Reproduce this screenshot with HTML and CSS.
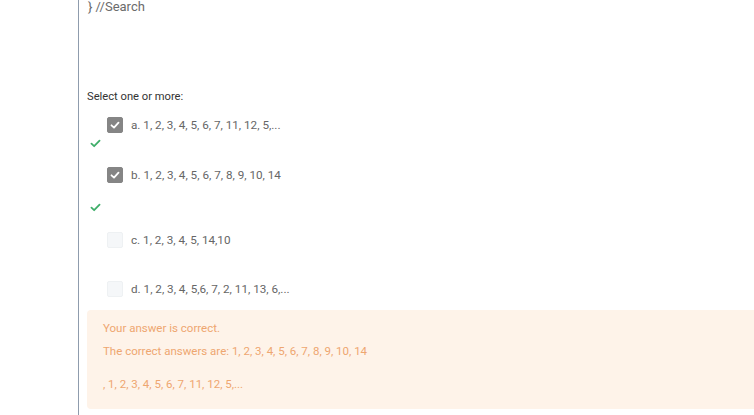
FILE: index.html
```html
<!DOCTYPE html>
<html>
<head>
<meta charset="utf-8">
<link rel="stylesheet" href="styles.css">
</head>
<body>
<div class="page">
  <div class="gutter"></div>
  <div class="main">
    <div class="code">} //Search</div>
    <div class="prompt">Select one or more:</div>
    <div class="answers">
      <div class="option">
        <span class="box checked"><svg viewBox="0 0 16 16" width="16" height="16"><path d="M4.5 8.3 L7 10.6 L11.5 5.6" fill="none" stroke="#fff" stroke-width="1.8" stroke-linecap="round" stroke-linejoin="round"/></svg></span>
        <span class="label">a. 1, 2, 3, 4, 5, 6, 7, 11, 12, 5,...</span>
      </div>
      <div class="mark"><svg viewBox="0 0 12 10" width="11" height="9"><path d="M1.5 5.2 L4.5 8 L10.5 1.8" fill="none" stroke="#3fae6a" stroke-width="2" stroke-linecap="round" stroke-linejoin="round"/></svg></div>
      <div class="option">
        <span class="box checked"><svg viewBox="0 0 16 16" width="16" height="16"><path d="M4.5 8.3 L7 10.6 L11.5 5.6" fill="none" stroke="#fff" stroke-width="1.8" stroke-linecap="round" stroke-linejoin="round"/></svg></span>
        <span class="label">b. 1, 2, 3, 4, 5, 6, 7, 8, 9, 10, 14</span>
      </div>
      <div class="mark mark-b"><svg viewBox="0 0 12 10" width="11" height="9"><path d="M1.5 5.2 L4.5 8 L10.5 1.8" fill="none" stroke="#3fae6a" stroke-width="2" stroke-linecap="round" stroke-linejoin="round"/></svg></div>
      <div class="option opt-c">
        <span class="box"></span>
        <span class="label">c. 1, 2, 3, 4, 5, 14,10</span>
      </div>
      <div class="option opt-d">
        <span class="box"></span>
        <span class="label">d. 1, 2, 3, 4, 5,6, 7, 2, 11, 13, 6,...</span>
      </div>
    </div>
    <div class="feedback">
      <p class="fb-line">Your answer is correct.</p>
      <p class="fb-line fb-answers">The correct answers are: 1, 2, 3, 4, 5, 6, 7, 8, 9, 10, 14</p>
      <p class="fb-line fb-extra">, 1, 2, 3, 4, 5, 6, 7, 11, 12, 5,...</p>
    </div>
  </div>
</div>
</body>
</html>
```
FILE: styles.css
```css
html, body {
  margin: 0;
  padding: 0;
  background: #fff;
  overflow: hidden;
}
body {
  font-family: Roboto, "Liberation Sans", sans-serif;
  width: 754px;
  height: 415px;
}
.page {
  display: flex;
  height: 415px;
}
.gutter {
  width: 78px;
  flex: none;
}
.main {
  flex: 1;
  border-left: 1px solid #8f9cad;
  padding-left: 8px;
  display: flex;
  flex-direction: column;
  min-width: 0;
}
.code {
  font-size: 13px;
  color: #6b6b6b;
  line-height: 14px;
  padding-left: 1px;
}
.prompt {
  margin-top: 76px;
  font-size: 11.2px;
  line-height: 14px;
  color: #333;
}
.answers {
  display: flex;
  flex-direction: column;
}
.option {
  display: flex;
  align-items: center;
  padding-left: 20px;
  height: 16px;
  margin-top: 13px;
}
.box {
  width: 16px;
  height: 16px;
  box-sizing: border-box;
  border-radius: 2px;
  background: #f5f7f9;
  border: 1px solid #eef1f3;
  flex: none;
  display: flex;
}
.box.checked {
  background: #858585;
  border-color: #858585;
}
.box svg {
  margin: -1px;
}
.label {
  margin-left: 8px;
  font-size: 11.7px;
  color: #666;
  white-space: nowrap;
}
.mark {
  height: 9px;
  margin-top: 6px;
  padding-left: 3px;
  display: flex;
}
.mark + .option {
  margin-top: 19px;
}
.mark-b {
  margin-top: 20px;
}
.option.opt-c {
  margin-top: 20px;
}
.option.opt-d {
  margin-top: 33px;
}
.feedback {
  margin-top: 13px;
  margin-right: -10px;
  background: #fef3e9;
  border-radius: 4px;
  padding: 12px 16px 12px;
  height: 99px;
  box-sizing: border-box;
  color: #eea670;
  font-size: 11.5px;
}
.fb-line {
  margin: 0;
  line-height: 13px;
}
.fb-answers {
  margin-top: 10px;
}
.fb-extra {
  margin-top: 20px;
}
```
